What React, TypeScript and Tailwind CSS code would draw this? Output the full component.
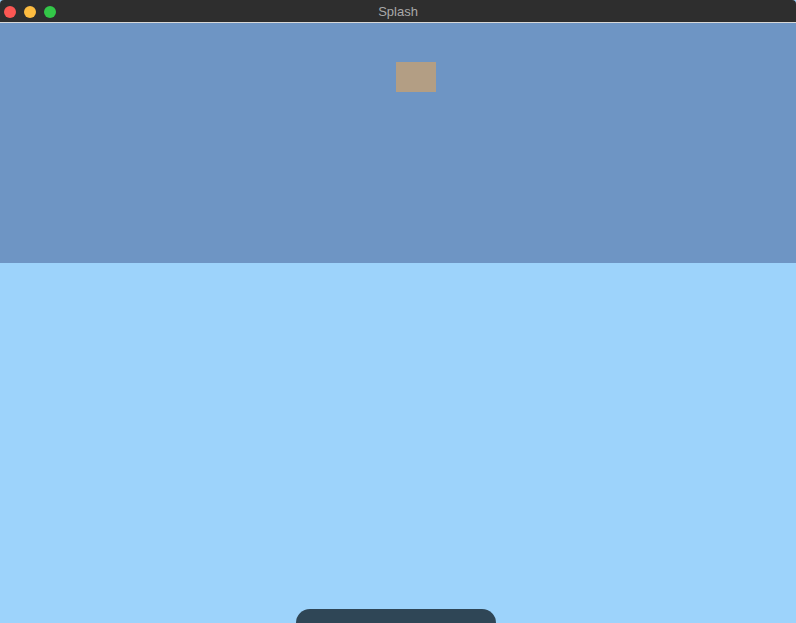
import React from "react";

export default function App() {
  return (
    <div className="w-[796px] h-[623px] overflow-hidden flex flex-col bg-[#9dd3fb]" style={{ fontFamily: '"Liberation Sans", Arial, sans-serif' }}>
      <div className="relative h-[23px] shrink-0 bg-[#2e2e2e] rounded-t-[4px] flex items-center border-b border-[#d8d8d8] pt-[2px]">
        <div className="flex items-center gap-[8px] pl-[4px]">
          <div className="w-[12px] h-[12px] rounded-full bg-[#fc5753]" />
          <div className="w-[12px] h-[12px] rounded-full bg-[#fdbc40]" />
          <div className="w-[12px] h-[12px] rounded-full bg-[#33c748]" />
        </div>
        <div className="absolute inset-0 pt-[2px] flex items-center justify-center text-[13px] text-[#a9a9a9]">Splash</div>
      </div>
      <div className="h-[240px] shrink-0 bg-[#6e95c4] flex justify-center pt-[39px]">
        <div className="w-[40px] h-[30px] bg-[#b39e84] ml-[36px]" />
      </div>
      <div className="flex-1 bg-[#9dd3fb] flex flex-col justify-end items-center">
        <div className="w-[200px] h-[14px] bg-[#2f4656] rounded-t-[18px] mr-[4px]" />
      </div>
    </div>
  );
}
